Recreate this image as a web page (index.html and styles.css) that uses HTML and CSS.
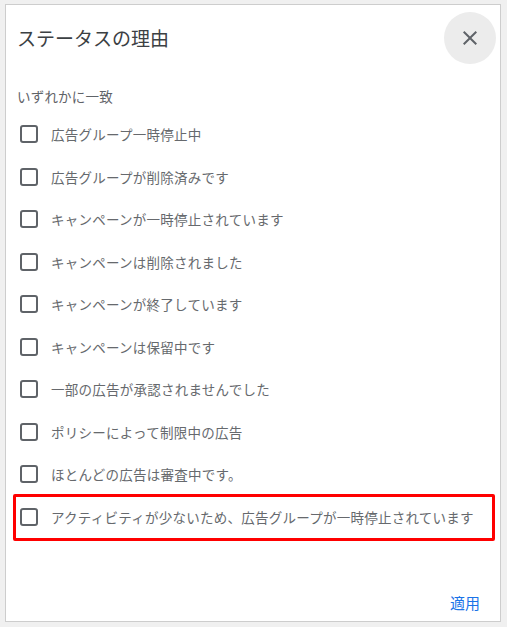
FILE: index.html
```html
<!DOCTYPE html>
<html lang="ja">
<head>
<meta charset="utf-8">
<link rel="stylesheet" href="styles.css">
</head>
<body>
<div class="dialog">
  <div class="header">
    <div class="title">ステータスの理由</div>
    <button class="close" aria-label="閉じる">
      <svg width="24" height="24" viewBox="0 0 24 24"><path d="M19 6.41L17.59 5 12 10.59 6.41 5 5 6.41 10.59 12 5 17.59 6.41 19 12 13.41 17.59 19 19 17.59 13.41 12z" fill="#5f6368"/></svg>
    </button>
  </div>
  <div class="subtitle">いずれかに一致</div>
  <div class="list">
    <label class="row"><span class="box"></span><span class="label">広告グループ一時停止中</span></label>
    <label class="row"><span class="box"></span><span class="label">広告グループが削除済みです</span></label>
    <label class="row"><span class="box"></span><span class="label">キャンペーンが一時停止されています</span></label>
    <label class="row"><span class="box"></span><span class="label">キャンペーンは削除されました</span></label>
    <label class="row"><span class="box"></span><span class="label">キャンペーンが終了しています</span></label>
    <label class="row"><span class="box"></span><span class="label">キャンペーンは保留中です</span></label>
    <label class="row"><span class="box"></span><span class="label">一部の広告が承認されませんでした</span></label>
    <label class="row"><span class="box"></span><span class="label">ポリシーによって制限中の広告</span></label>
    <label class="row"><span class="box"></span><span class="label">ほとんどの広告は審査中です。</span></label>
    <div class="highlight">
      <label class="row row-hl"><span class="box"></span><span class="label">アクティビティが少ないため、広告グループが一時停止されています</span></label>
    </div>
  </div>
  <div class="footer">
    <button class="apply">適用</button>
  </div>
</div>
</body>
</html>
```
FILE: styles.css
```css
* { box-sizing: border-box; }
html, body { margin: 0; }
body {
  background: #f0f0f0;
  padding: 4px 6px 5px 5px;
  font-family: "Noto Sans CJK JP", "Noto Sans", sans-serif;
}
.dialog {
  background: #fff;
  border: 1px solid #cdcdcd;
  height: 618px;
  display: flex;
  flex-direction: column;
}
.header {
  display: flex;
  justify-content: space-between;
  align-items: center;
  padding: 7px 4px 0 11px;
}
.title {
  font-size: 19px;
  line-height: 26px;
  color: #3c4043;
  letter-spacing: 0;
}
.close {
  width: 52px;
  height: 52px;
  border-radius: 50%;
  border: none;
  background: #ececec;
  display: flex;
  align-items: center;
  justify-content: center;
  padding: 0;
}
.close svg { display: block; }
.subtitle {
  margin-top: 22px;
  padding-left: 11px;
  font-size: 13.5px;
  line-height: 20px;
  color: #5f6368;
  letter-spacing: 0.2px;
}
.list {
  margin-top: 7px;
  display: flex;
  flex-direction: column;
}
.row {
  height: 42.5px;
  display: flex;
  align-items: center;
  gap: 13px;
  padding-left: 14px;
}
.box {
  width: 18px;
  height: 18px;
  border: 2px solid #5f6368;
  border-radius: 3px;
  flex: none;
}
.label {
  font-size: 13.5px;
  color: #66696d;
  letter-spacing: 0.25px;
}
.highlight {
  margin: -2px 5px 0 7px;
  border: 3px solid #ff0000;
  border-radius: 2px;
  height: 47px;
  display: flex;
  align-items: center;
}
.row-hl {
  padding-left: 4px;
  height: 41px;
}
.footer {
  margin-top: auto;
  display: flex;
  justify-content: flex-end;
  padding: 0 20px 8px;
}
.apply {
  border: none;
  background: none;
  padding: 0;
  font-family: inherit;
  font-size: 15px;
  line-height: 20px;
  color: #1a73e8;
}
```
